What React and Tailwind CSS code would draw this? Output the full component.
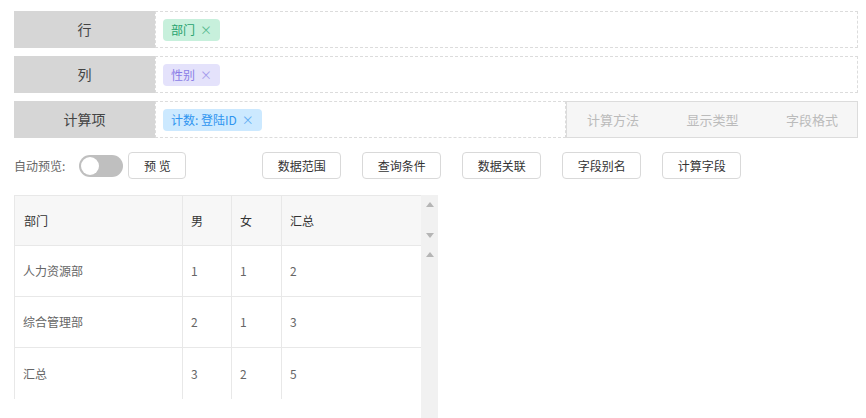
import React from "react";

const font = { fontFamily: '"Noto Sans CJK SC", "Noto Sans", sans-serif' };

function Tag({ children, cls }) {
  return (
    <span className={`inline-flex items-center h-[22px] px-[8px] rounded-[4px] text-[12px] leading-none ${cls}`}>
      {children}
      <span className="ml-[5px] text-[12px] opacity-70">×</span>
    </span>
  );
}

function Label({ children }) {
  return (
    <div className="w-[141px] shrink-0 bg-[#d6d6d6] flex items-center justify-center text-[14px] text-[#444]">
      {children}
    </div>
  );
}

function Btn({ children, w = "w-[79px]" }) {
  return (
    <button className={`${w} h-[27px] border border-[#d9d9d9] rounded-[4px] bg-white text-[12px] text-[#333] flex items-center justify-center`}>
      {children}
    </button>
  );
}

const Up = () => (
  <svg width="8" height="5" viewBox="0 0 8 5"><path d="M0 5 L4 0 L8 5 Z" fill="#b5b5b5" /></svg>
);
const Down = () => (
  <svg width="8" height="5" viewBox="0 0 8 5"><path d="M0 0 L4 5 L8 0 Z" fill="#b5b5b5" /></svg>
);

export default function App() {
  const rows = [
    ["人力资源部", "1", "1", "2"],
    ["综合管理部", "2", "1", "3"],
    ["汇总", "3", "2", "5"],
  ];
  return (
    <div style={font} className="w-[866px] h-[418px] bg-white overflow-hidden relative">
      <div className="pt-[11px] pl-[14px] pr-[8px] flex flex-col gap-[8px]">
        <div className="flex h-[37px]">
          <Label>行</Label>
          <div className="flex-1 border border-dashed border-[#dcdcdc] flex items-center pl-[7px]">
            <Tag cls="bg-[#c7f0dc] text-[#27a36f]">部门</Tag>
          </div>
        </div>
        <div className="flex h-[37px]">
          <Label>列</Label>
          <div className="flex-1 border border-dashed border-[#dcdcdc] flex items-center pl-[7px]">
            <Tag cls="bg-[#e4e2fb] text-[#8a7de6]">性别</Tag>
          </div>
        </div>
        <div className="flex h-[37px]">
          <Label>计算项</Label>
          <div className="w-[411px] border border-dashed border-[#dcdcdc] flex items-center pl-[7px]">
            <Tag cls="bg-[#cce9ff] text-[#2f95f0]">计数: 登陆ID</Tag>
          </div>
          <div className="flex-1 border border-[#dcdcdc] bg-[#f6f6f6] flex items-center justify-between text-[13px] text-[#bbbbbb] pl-[20px] pr-[19px]">
            <span>计算方法</span>
            <span>显示类型</span>
            <span>字段格式</span>
          </div>
        </div>
      </div>

      <div className="flex items-center mt-[14px] pl-[14px] h-[27px]">
        <span className="text-[12px] text-[#666]">自动预览:</span>
        <div className="ml-[14px] w-[44px] h-[22px] rounded-full bg-[#bfbfbf] relative">
          <div className="absolute left-[2px] top-[2px] w-[18px] h-[18px] rounded-full bg-white" />
        </div>
        <div className="ml-[5px]"><Btn w="w-[58px]">预 览</Btn></div>
        <div className="ml-[76px] flex gap-[21px]">
          <Btn>数据范围</Btn>
          <Btn>查询条件</Btn>
          <Btn>数据关联</Btn>
          <Btn>字段别名</Btn>
          <Btn>计算字段</Btn>
        </div>
      </div>

      <div className="flex mt-[16px] ml-[14px]">
        <div className="w-[407px]">
          <div className="grid grid-cols-[168px_49px_50px_140px] h-[51px] bg-[#f7f7f7] border border-[#e8e8e8] border-r-0 text-[12px] text-[#333]">
            <div className="flex items-center pl-[9px] border-r border-[#e8e8e8]">部门</div>
            <div className="flex items-center pl-[8px] border-r border-[#e8e8e8]">男</div>
            <div className="flex items-center pl-[8px] border-r border-[#e8e8e8]">女</div>
            <div className="flex items-center pl-[8px]">汇总</div>
          </div>
          {rows.map((r, i) => (
            <div
              key={i}
              className={`grid grid-cols-[168px_49px_50px_140px] h-[51px] border-l border-[#e8e8e8] text-[12px] text-[#666] ${i < 2 ? "border-b" : ""}`}
            >
              <div className="flex items-center pl-[8px] border-r border-[#e8e8e8]">{r[0]}</div>
              <div className="flex items-center pl-[8px] border-r border-[#e8e8e8]">{r[1]}</div>
              <div className="flex items-center pl-[8px] border-r border-[#e8e8e8]">{r[2]}</div>
              <div className="flex items-center pl-[8px]">{r[3]}</div>
            </div>
          ))}
        </div>
        <div className="w-[17px] h-[223px] bg-[#f1f1f1] flex flex-col items-center">
          <div className="mt-[7px]"><Up /></div>
          <div className="mt-[26px]"><Down /></div>
          <div className="mt-[14px]"><Up /></div>
        </div>
      </div>
    </div>
  );
}
